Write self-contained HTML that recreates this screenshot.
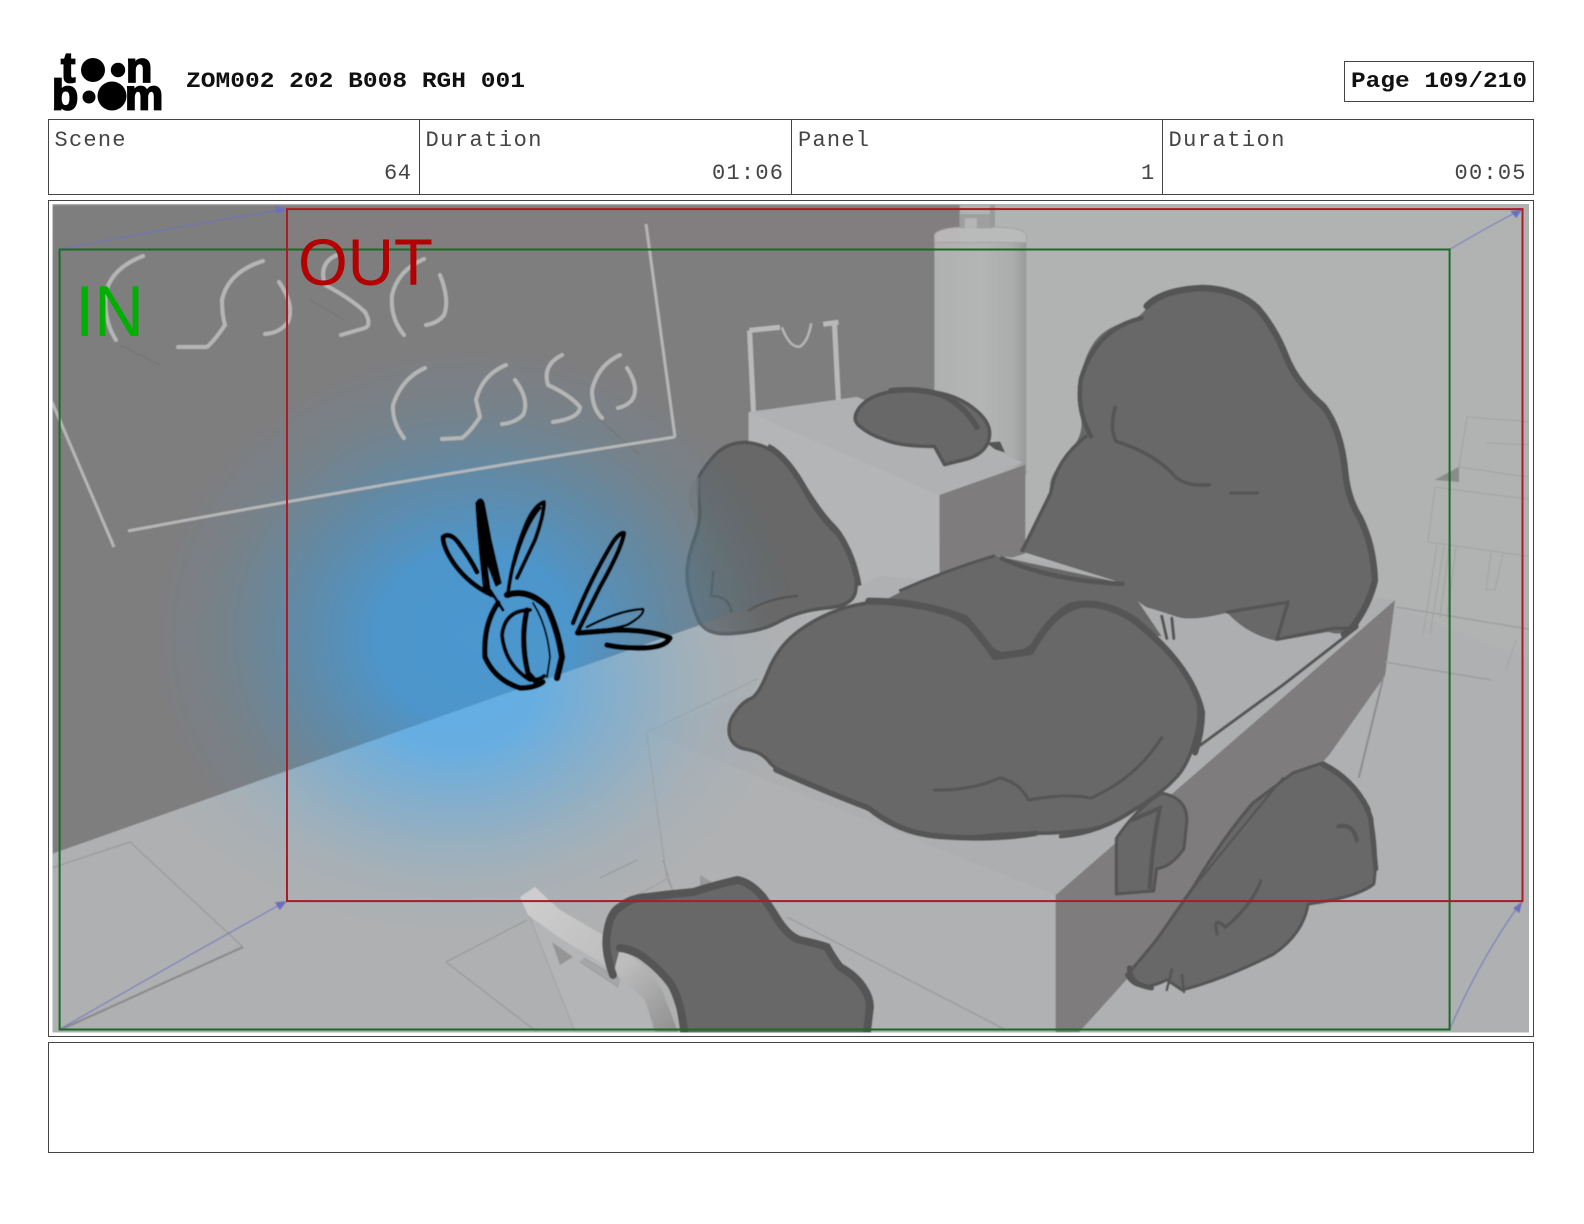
<!DOCTYPE html>
<html lang="en"><head><meta charset="utf-8"><title>ZOM002 202 B008 RGH 001</title>
<style>html,body{margin:0;padding:0;background:#fff}svg{display:block}
.m{font-family:"Liberation Mono",monospace;font-size:22px;fill:#444}
.b{font-family:"Liberation Mono",monospace;font-size:22px;font-weight:700;fill:#111}
.l{font-family:"Liberation Sans",sans-serif;font-weight:700;font-size:43px;fill:#000;stroke:#000;stroke-width:1.8}
</style></head><body>
<svg xmlns="http://www.w3.org/2000/svg" width="1584" height="1224" viewBox="0 0 1584 1224">
<defs>
<clipPath id="img"><rect x="52.5" y="204" width="1476.5" height="828.5"/></clipPath>
<clipPath id="wallc"><polygon points="52,203 950,203 950,240 1020,240 1020,500 930,535 52,845"/></clipPath>
<clipPath id="floorc"><polygon points="52,845 930,535 1020,500 1020,1030 52,1030"/></clipPath>
<linearGradient id="tank" x1="0" x2="1" y1="0" y2="0"><stop offset="0" stop-color="#afb1b1"/><stop offset=".5" stop-color="#b4b6b6"/><stop offset=".85" stop-color="#abadad"/><stop offset="1" stop-color="#999a9a"/></linearGradient>
<linearGradient id="chr" x1="0" x2="1" y1="0" y2="1"><stop offset="0" stop-color="#d0d0d0"/><stop offset=".6" stop-color="#bcbcbc"/><stop offset="1" stop-color="#8f8f8f"/></linearGradient>
<radialGradient id="gw" gradientUnits="userSpaceOnUse" cx="470" cy="630" r="320" gradientTransform="translate(470 630) scale(1 .9) translate(-470 -630)">
<stop offset="0" stop-color="#4b97cf"/><stop offset=".3" stop-color="#4b97cf" stop-opacity=".95"/><stop offset=".55" stop-color="#4d92c0" stop-opacity=".6"/><stop offset=".8" stop-color="#5890b0" stop-opacity=".2"/><stop offset="1" stop-color="#5890b0" stop-opacity="0"/></radialGradient>
<radialGradient id="gf" gradientUnits="userSpaceOnUse" cx="450" cy="680" r="330" gradientTransform="translate(450 680) scale(1 .75) translate(-450 -680)">
<stop offset="0" stop-color="#63aee4"/><stop offset=".25" stop-color="#63aee4" stop-opacity=".95"/><stop offset=".55" stop-color="#73aed6" stop-opacity=".55"/><stop offset=".8" stop-color="#8ab0c8" stop-opacity=".2"/><stop offset="1" stop-color="#8ab0c8" stop-opacity="0"/></radialGradient>
<filter id="soft" x="0" y="0" width="100%" height="100%"><feGaussianBlur stdDeviation=".45"/></filter>
</defs>

<!-- logo -->
<text class="l" x="61" y="82">t</text><circle cx="93" cy="70" r="12"/><circle cx="118" cy="70" r="7.2"/><text class="l" x="126" y="82">n</text>
<text class="l" x="52" y="109.5">b</text><circle cx="89" cy="97" r="6.5"/><circle cx="112" cy="96" r="14.5"/><text class="l" x="125" y="109.5">m</text>

<text class="b" x="186" y="87" textLength="339" lengthAdjust="spacingAndGlyphs">ZOM002 202 B008 RGH 001</text>
<rect x="1344.5" y="61.5" width="189" height="40" fill="none" stroke="#444"/>
<text class="b" x="1351" y="87" textLength="176" lengthAdjust="spacingAndGlyphs">Page 109/210</text>

<!-- info table -->
<rect x="48.5" y="119.5" width="1485" height="75" fill="none" stroke="#444"/>
<path d="M419.5 119.5V194.5M791.5 119.5V194.5M1162.5 119.5V194.5" stroke="#444" fill="none"/>
<text class="m" x="54.5" y="146" textLength="71" lengthAdjust="spacing">Scene</text>
<text class="m" x="425.5" y="146" textLength="116" lengthAdjust="spacing">Duration</text>
<text class="m" x="798" y="146" textLength="71" lengthAdjust="spacing">Panel</text>
<text class="m" x="1168.5" y="146" textLength="116" lengthAdjust="spacing">Duration</text>
<text class="m" x="384" y="179" textLength="27" lengthAdjust="spacing">64</text>
<text class="m" x="712" y="179" textLength="71" lengthAdjust="spacing">01:06</text>
<text class="m" x="1141" y="179">1</text>
<text class="m" x="1454.5" y="179" textLength="71" lengthAdjust="spacing">00:05</text>

<!-- panel frame and notes box -->
<rect x="48.5" y="200.5" width="1485" height="836" fill="none" stroke="#444"/>
<rect x="48.5" y="1042.5" width="1485" height="110" fill="none" stroke="#444"/>

<g clip-path="url(#img)">
<g filter="url(#soft)">
<g transform="scale(1.0102)">
<!-- background -->
<rect x="50" y="200" width="1470" height="830" fill="#afb0b1"/>
<polygon points="950,200 1520,200 1520,655 1380,600 1015,560" fill="#b1b3b3"/>
<polygon points="52,203 950,203 950,240 930,240 930,535 52,845" fill="#7f7e7f"/>
<!-- tank -->
<rect x="925" y="235" width="91" height="235" fill="url(#tank)"/>
<path d="M925 240V232Q930 226 950 225H990Q1012 226 1016 232V240Z" fill="#b9bbbb" stroke="#a3a3a3"/>
<rect x="950" y="212" width="32" height="14" fill="#9f9f9f"/><rect x="955" y="216" width="12" height="10" fill="#b5b5b5"/><rect x="980" y="203" width="5" height="22" fill="#9a9a9a"/>
<!-- chair back behind cabinet -->
<path d="M742 327L746 410M826 320L830 398M742 327L772 324M815 321L830 319" stroke="#b9b9b9" stroke-width="5" fill="none"/>
<path d="M774 324Q782 345 792 343Q800 338 803 320" stroke="#b5b5b5" stroke-width="2.5" fill="none"/>
<!-- cabinet -->
<polygon points="741,408 848,393 1012,458 930,490 930,575 870,570 800,610 741,610" fill="#b4b5b6"/>
<polygon points="741,408 848,393 1012,458 930,490" fill="#b0b1b2"/>
<polygon points="930,490 1015,460 1015,548 930,574" fill="#7e7c7d"/>
<!-- table -->
<polygon points="640,725 760,680 880,590 985,550 1381,594 1045,886" fill="#adaeaf"/>
<polygon points="640,725 1045,886 1045,1022 670,1022 660,870" fill="#b0b1b2"/>
<polygon points="1045,886 1381,594 1371,669 1316,747 1068,1022 1045,1022" fill="#7e7c7d"/>
<path d="M1369 672L1345 770" stroke="#8c8c8c" stroke-width="2" fill="none"/>
<path d="M640 725L750 672M640 725L660 870L672 892M660 870L620 892" stroke="#a0a1a2" stroke-width="1.2" fill="none"/>
<!-- blob C under glow -->
<path d="M692,472 Q695,465 707,451 Q720,437 740,438 Q760,440 775,455 Q790,470 802,490 Q815,510 825,520 Q835,530 842,550 Q850,570 847,585 Q845,600 817,602 Q790,605 772,615 Q755,625 727,627 Q700,630 692,615 Q685,600 681,580 Q678,560 686,537 Q695,515 692,497 Q690,480 692,472Z" fill="#676767" stroke="#545454" stroke-width="3.5" stroke-linejoin="round"/>
<path d="M692,472Q680,480 682,500Q688,510 690,520" fill="#777" fill-opacity=".8"/>
<path d="M760,442Q780,452 800,490Q815,515 830,528Q845,550 850,580" fill="none" stroke="#545454" stroke-width="6"/>
<path d="M706 565L704 590Q722 590 724 606M740 605Q760 592 790 590" fill="none" stroke="#555" stroke-width="2.5"/>
<!-- glow -->
<rect x="50" y="200" width="1000" height="830" fill="url(#gw)" clip-path="url(#wallc)"/>
<rect x="50" y="200" width="1000" height="830" fill="url(#gf)" clip-path="url(#floorc)"/>
</g>

<!-- painted letters on the wall -->
<g fill="none" stroke="#b5b5b5" stroke-width="4" stroke-linecap="round" stroke-linejoin="round">
<path d="M143 256Q112 268 106 292Q103 320 116 340"/>
<path d="M263 261Q228 272 222 300Q222 315 225 325Q215 340 207 347L178 347"/>
<path d="M279 282Q295 305 288 322Q280 333 265 334"/>
<path d="M337 255Q318 263 325 285Q350 298 365 312Q372 325 365 328L341 335"/>
<path d="M424 259Q398 270 392 295Q390 318 404 335"/>
<path d="M440 275Q450 300 444 315Q438 323 426 325"/>
<path d="M425 368Q402 378 393 405Q392 422 404 438"/>
<path d="M506 365Q482 375 476 400L480 417Q470 432 462 438L442 439"/>
<path d="M515 380Q530 400 523 415Q515 423 502 424"/>
<path d="M562 355Q542 365 548 385Q570 395 580 407Q580 418 553 422"/>
<path d="M620 355Q598 365 592 390Q592 408 602 418"/>
<path d="M627 368Q640 388 632 400Q627 406 618 408"/>
</g>
<path d="M120 345L160 365M310 300L345 320M600 420L640 455" stroke="#6f6f70" stroke-width="1.5" fill="none" opacity=".5"/>
<path d="M646 224L675 437M52 402L114 547M128 531Q400 480 675 437" fill="none" stroke="#bcbcbc" stroke-width="3" stroke-opacity=".9"/>

<!-- floor details, real px -->
<g fill="none" stroke="#9a9b9c" stroke-width="1.3">
<path d="M51 868L130 842L243 947"/>
<path d="M446 962L527 920M446 962L537 1032M600 878L637 860M663 860L673 892M787 917L1006 1030"/>
<path d="M1396 607L1534 630M1385 662L1491 680"/>
</g>
<g fill="none" stroke="#a3a4a4" stroke-width="1.1">
<path d="M1467 417L1534 422M1467 417L1459 467M1435 480L1459 467M1435 487L1534 500M1459 467L1534 478M1435 487L1428 542L1534 557"/>
<path d="M1437 545L1423 635M1444 546L1430 635M1449 547L1440 618M1456 547L1447 618"/>
<path d="M1491 553L1486 590L1495 590L1503 553M1486 443L1534 445M1516 640L1506 670"/>
</g>
<path d="M243 947L60 1030" stroke="#8a8b8c" stroke-width="2.2" fill="none"/>
<polygon points="1435,480 1459,467 1459,482" fill="#8a8b8b"/>
<!-- chair -->
<polygon points="523,900 647,975 678,1032 575,1032" fill="#b4b5b6" stroke="#a0a1a2" stroke-width="1"/>
<polygon points="520,897 535,887 560,910 603,935 647,968 662,990 678,1032 655,1032 645,1000 610,968 560,938 528,915" fill="url(#chr)"/>
<polygon points="552,942 573,957 560,965" fill="#959596"/>
<path d="M580 962L618 987L619 978L584 958" fill="#a5a6a7" stroke="#9a9a9a" stroke-width=".8"/>
<polygon points="700,875 713,883 700,890" fill="#99999a"/>

<g transform="scale(1.0102)">
<!-- blob D -->
<path d="M851,403 Q860,392 880,388 Q900,385 925,388 Q950,392 966,406 Q983,420 979,435 Q975,450 955,455 L935,460 L925,442 Q890,442 875,435 Q860,430 851,422 Q842,415 851,403Z" fill="#676767" stroke="#545454" stroke-width="3.5" stroke-linejoin="round"/>
<path d="M880 387Q910 383 935 392Q958 405 968 425" fill="none" stroke="#545454" stroke-width="5.5"/>
<path d="M976 438L990 437L995 448L985 445Z" fill="#555"/>
<!-- blob A -->
<path d="M1135,305 Q1140,295 1155,290 Q1170,285 1195,286 Q1220,288 1235,299 Q1250,310 1260,327 Q1270,345 1277,360 Q1285,375 1300,392 Q1315,410 1322,430 Q1330,450 1332,470 Q1335,490 1345,510 Q1355,530 1358,555 Q1362,580 1353,595 Q1345,610 1337,620 Q1330,630 1315,625 L1264,634 Q1235,628 1215,606 Q1180,615 1165,610 Q1150,605 1140,602 Q1130,600 1122,589 L1115,578 L1010,545 Q1025,520 1032,505 Q1040,490 1040,480 Q1040,470 1057,450 Q1075,430 1070,412 Q1065,395 1070,372 Q1075,350 1085,337 Q1095,325 1112,320 Q1130,315 1135,305 Z" fill="#676767" stroke="#676767" stroke-width="1" stroke-linejoin="round"/>
<g fill="none" stroke="#555" stroke-linecap="round" stroke-linejoin="round">
<path d="M1135 303Q1150 287 1190 285Q1225 286 1245 305Q1262 325 1272 350Q1282 378 1310 402Q1328 425 1332 470Q1335 495 1346 512Q1360 540 1361 575Q1355 600 1338 622" stroke-width="6.5"/>
<path d="M1130 315Q1085 325 1070 375Q1065 405 1080 432" stroke-width="4.5"/>
<path d="M1075 432Q1045 455 1040 488M1040 488L1012 545" stroke-width="3.5"/>
<path d="M1104 403Q1098 425 1105 437Q1140 448 1160 468Q1170 482 1197 480" stroke-width="3.5"/>
<path d="M1218 488L1245 488" stroke-width="3"/>
<path d="M1215 606L1275 596L1264 633L1320 622L1342 622" stroke-width="3.2"/>
<path d="M1330 628L1342 620" stroke-width="6"/>
<path d="M1342 622L1270 678L1185 740" stroke-width="3"/>
<path d="M1150 610L1155 632M1160 612L1162 632" stroke-width="3"/>
</g>
<!-- blob B -->
<path d="M880,592 Q930,565 985,550 L1115,578 L1150,630 L1110,625 L1050,625 L1000,665 L960,630 Z" fill="#676767"/>
<path d="M890 585Q935 565 985 550" fill="none" stroke="#555" stroke-width="3"/>
<path d="M990 552Q1040 575 1113 578" fill="none" stroke="#555" stroke-width="4.5"/>
<path d="M742,692 Q750,690 760,665 Q770,640 790,625 Q810,610 835,602 Q860,595 880,595 Q900,595 930,605 Q960,615 972,632 Q985,650 1002,648 Q1020,645 1035,625 Q1050,605 1070,600 Q1090,595 1110,607 Q1130,620 1155,645 Q1180,670 1185,690 Q1190,710 1182,735 Q1175,760 1162,772 Q1150,785 1122,802 Q1095,820 1072,822 Q1050,825 1025,825 Q1000,825 980,827 Q960,830 930,827 Q900,825 880,812 Q860,800 815,782 Q770,765 762,755 Q755,745 740,742 Q725,740 722,727 Q720,715 728,705 Q735,695 742,692 Z" fill="#676767" stroke="#555" stroke-width="3.5" stroke-linejoin="round"/>
<g fill="none" stroke="#555" stroke-linecap="round" stroke-linejoin="round">
<path d="M860 595Q910 595 955 612Q975 635 985 650L1020 645Q1040 610 1060 600Q1090 592 1125 615" stroke-width="7"/>
<path d="M1125 615Q1180 660 1190 705Q1190 725 1183 745" stroke-width="6"/>
<path d="M768 762Q820 785 860 800Q890 825 930 828Q985 832 1025 825" stroke-width="5.5"/>
<path d="M925 782Q960 783 990 770Q1010 775 1018 792Q1055 785 1080 790Q1125 770 1150 730" stroke-width="3"/>
<path d="M1125 800Q1090 825 1050 828" stroke-width="4"/>
</g>
<!-- foot -->
<path d="M1105,830 Q1125,800 1150,785 Q1175,790 1175,812 L1172,840 Q1160,858 1145,860 L1142,882 L1105,885 Z" fill="#676767" stroke="#555" stroke-width="3" stroke-linejoin="round"/>
<path d="M1120 812L1148 800Q1140 840 1138 880" fill="none" stroke="#555" stroke-width="4"/>
<!-- blob F -->
<path d="M1115,965 Q1125,955 1145,930 L1180,880 Q1210,830 1240,795 L1280,765 L1310,755 Q1340,770 1355,800 Q1365,840 1360,875 Q1345,888 1295,895 Q1290,925 1260,945 Q1210,970 1170,980 L1155,970 Q1125,985 1115,965Z" fill="#676767" stroke="#555" stroke-width="3" stroke-linejoin="round"/>
<g fill="none" stroke="#555" stroke-linecap="round">
<path d="M1310 757Q1345 775 1357 810L1362 860" stroke-width="5"/>
<path d="M1118 958Q1118 975 1140 978" stroke-width="5"/>
<path d="M1205 925Q1200 905 1213 918Q1240 895 1248 872" stroke-width="3"/>
<path d="M1172 890L1270 770" stroke-width="2"/>
<path d="M1325 818Q1340 815 1343 832" stroke-width="4"/>
<path d="M1160 960L1155 980M1170 965L1172 982" stroke-width="2.5"/>
</g>
</g>
<!-- blob E, real px -->
<path d="M613 975Q604 950 607 933Q610 912 620 907Q630 898 647 897Q670 894 693 892Q715 885 737 880Q750 882 763 897Q772 910 780 923Q790 937 800 940Q815 943 827 947Q833 958 840 967Q855 975 863 987Q870 997 870 1007L863 1040L685 1040Q683 1020 680 1007Q675 990 670 983Q660 970 647 960Q635 950 620 948Z" fill="#676767"/>
<path d="M613 975Q604 950 607 933Q610 912 620 907Q630 898 647 897Q670 894 693 892Q715 885 737 880Q750 882 763 897Q772 910 780 923Q790 937 800 940Q815 943 827 947Q833 958 840 967Q855 975 863 987Q870 997 870 1007L866 1040M685 1040Q683 1020 680 1007Q675 990 670 983Q660 970 647 960Q635 950 620 948" fill="none" stroke="#555" stroke-width="8" stroke-linecap="round"/>

<!-- doodle -->
<g fill="none" stroke="#000" stroke-linecap="round" stroke-linejoin="round">
<path d="M492 595Q470 585 455 565Q443 548 443 537Q450 532 458 542Q470 558 477 572" stroke-width="5"/>
<path d="M476 503Q481 495 484 503L491 540L501 583L496 586L486 560L490 590L484 592Q478 540 476 503Z" fill="#000" stroke-width="1.5"/>
<path d="M490 590L503 610" stroke-width="3"/>
<path d="M508 593Q513 555 527 522Q535 505 544 502Q544 515 535 540L517 578" stroke-width="4"/>
<path d="M514 565Q525 525 540 508" stroke-width="3"/>
<path d="M507 595Q528 588 547 607Q558 630 562 657L557 678" stroke-width="6.5"/>
<path d="M498 603Q483 625 485 657Q495 680 520 688Q535 688 543 682" stroke-width="5.5"/>
<path d="M530 610Q505 610 502 635Q505 665 530 680Q540 680 544 676" stroke-width="4"/>
<path d="M527 610Q520 640 528 673L537 683" stroke-width="5.5"/>
<path d="M533 603Q547 625 550 657L547 677" stroke-width="2"/>
<path d="M573 623Q590 580 613 542Q620 532 624 533Q622 548 600 587L577 633" stroke-width="4.5"/>
<path d="M578 633L617 630Q650 630 670 638Q665 648 640 648Q620 648 607 645" stroke-width="5.5"/>
<path d="M587 627Q620 610 643 609Q645 615 627 625Q610 630 597 630" stroke-width="2.6"/>
</g>

<g transform="scale(1.0102)">
<rect x="284" y="207" width="666" height="40" fill="#c07070" opacity=".04"/>
<!-- camera path arrows -->
<g fill="none" stroke="#6a70bf" stroke-width="1.2" stroke-opacity=".8">
<path d="M59 247Q170 225 278 208"/>
<path d="M1435 247Q1472 225 1503 209"/>
<path d="M59 1019Q170 955 278 895"/>
<path d="M1435 1019Q1465 950 1503 897"/>
</g>
<g fill="#6a70bf">
<polygon points="284,207 272,203 274,212"/>
<polygon points="1507,207 1495,209 1501,216"/>
<polygon points="284,892 272,893 277,901"/>
<polygon points="1507,892 1498,899 1504,904"/>
</g>
</g>
</g>
<!-- frames -->
<rect x="59.6" y="249.5" width="1390" height="780" fill="none" stroke="#1a6a28" stroke-width="2"/>
<rect x="287" y="209.1" width="1235.5" height="692" fill="none" stroke="#ad1a28" stroke-width="2"/>
<text x="75" y="336" font-family="'Liberation Sans',sans-serif" font-size="72" fill="#00b000" textLength="69" lengthAdjust="spacingAndGlyphs">IN</text>
<text x="298" y="285" font-family="'Liberation Sans',sans-serif" font-size="66" fill="#b30000" textLength="135" lengthAdjust="spacingAndGlyphs">OUT</text>
</g>
</svg>
</body></html>
